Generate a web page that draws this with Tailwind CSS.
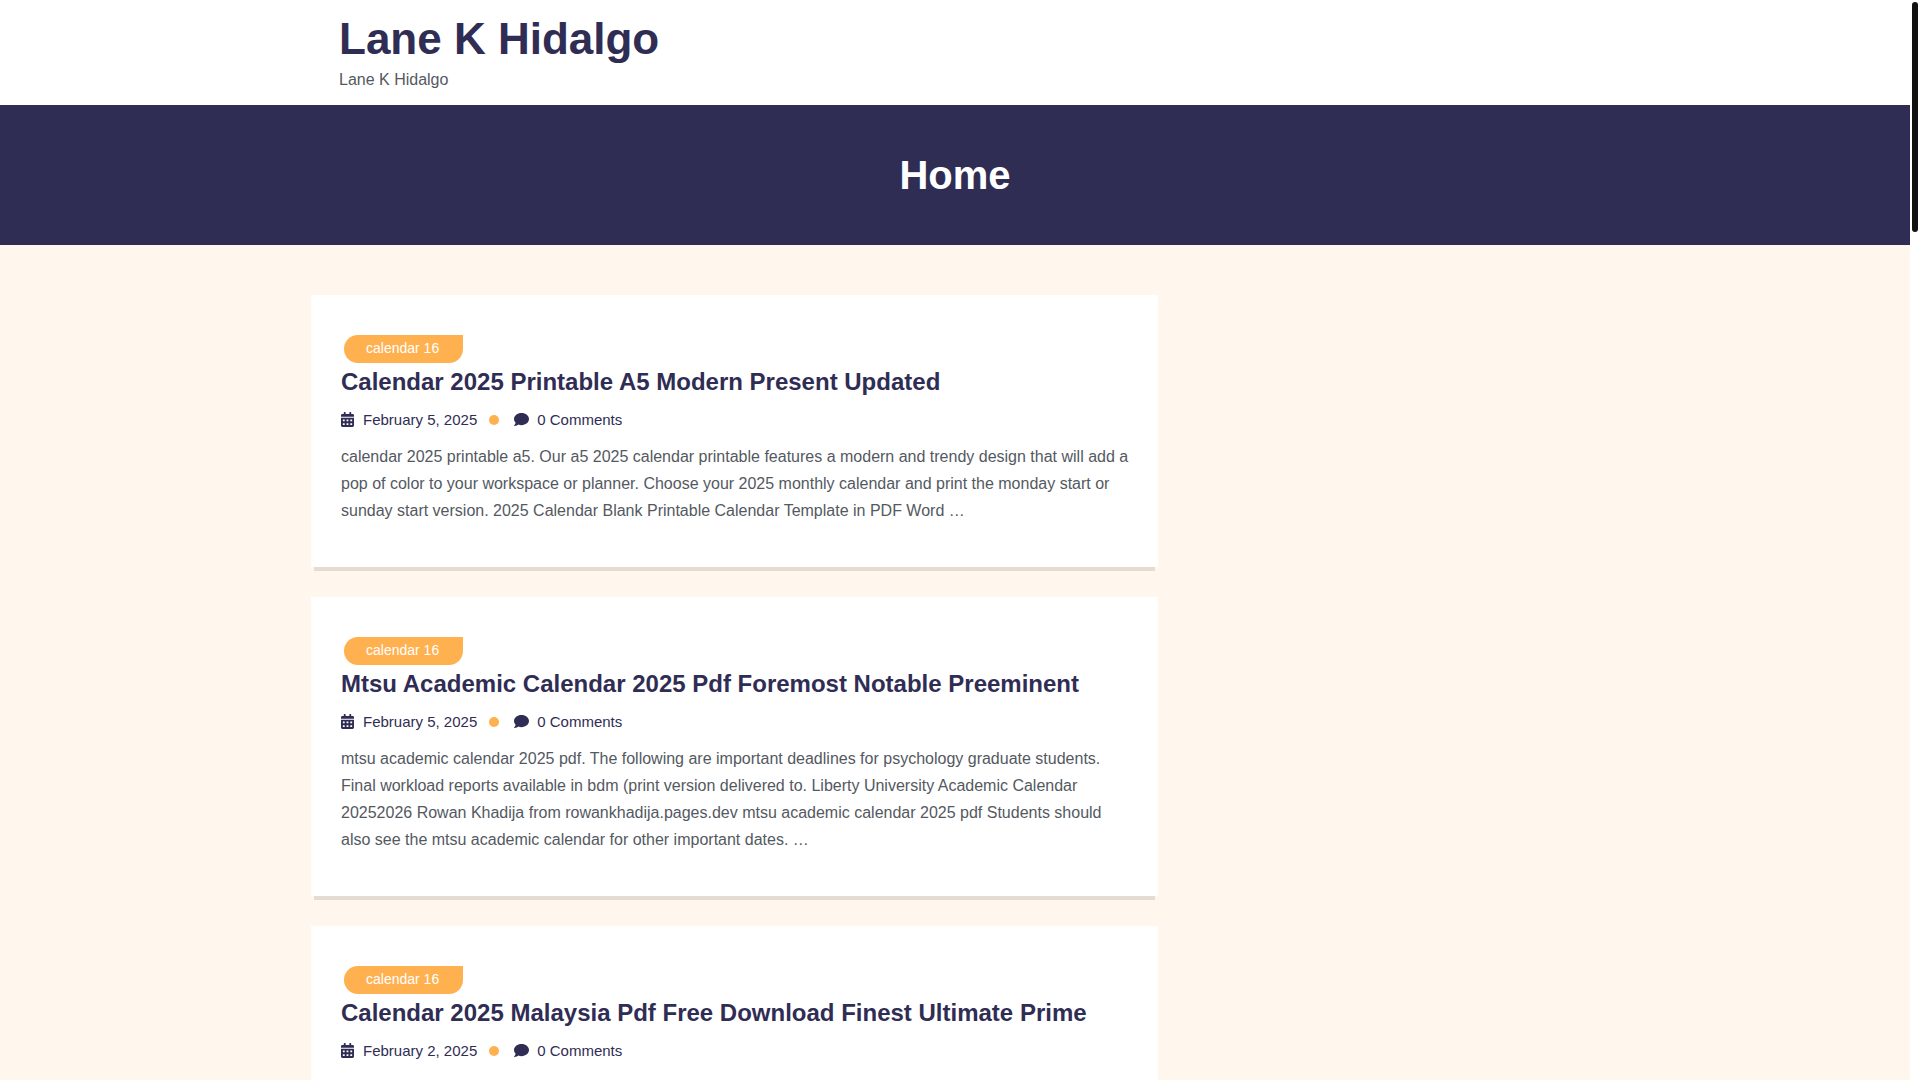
<!DOCTYPE html>
<html lang="en">
<head>
  <meta charset="UTF-8">
  <meta name="viewport" content="width=device-width, initial-scale=1.0">
  <title>Lane K Hidalgo</title>
  <script src="https://cdn.jsdelivr.net/npm/@tailwindcss/browser@4"></script>
</head>
<body class="relative h-screen overflow-hidden bg-white pr-[10px] font-[Arial,'Liberation_Sans',sans-serif] text-base text-[#54595f]">

  <!-- icons shared by the post meta rows -->
  <svg class="hidden" xmlns="http://www.w3.org/2000/svg">
    <symbol id="icon-calendar" viewBox="0 0 448 512">
      <path d="M0 464c0 26.500 21.500 48 48 48h352c26.500 0 48-21.500 48-48V192H0v272zm320-196c0-6.600 5.400-12 12-12h40c6.600 0 12 5.400 12 12v40c0 6.600-5.400 12-12 12h-40c-6.600 0-12-5.400-12-12v-40zm0 128c0-6.600 5.400-12 12-12h40c6.600 0 12 5.400 12 12v40c0 6.600-5.400 12-12 12h-40c-6.600 0-12-5.400-12-12v-40zM192 268c0-6.600 5.400-12 12-12h40c6.600 0 12 5.400 12 12v40c0 6.600-5.400 12-12 12h-40c-6.600 0-12-5.400-12-12v-40zm0 128c0-6.600 5.400-12 12-12h40c6.600 0 12 5.400 12 12v40c0 6.600-5.400 12-12 12h-40c-6.600 0-12-5.400-12-12v-40zM64 268c0-6.600 5.400-12 12-12h40c6.600 0 12 5.400 12 12v40c0 6.600-5.400 12-12 12H76c-6.600 0-12-5.400-12-12v-40zm0 128c0-6.600 5.400-12 12-12h40c6.600 0 12 5.400 12 12v40c0 6.600-5.400 12-12 12H76c-6.600 0-12-5.400-12-12v-40zM400 64h-48V16c0-8.800-7.200-16-16-16h-32c-8.800 0-16 7.200-16 16v48H160V16c0-8.800-7.200-16-16-16h-32c-8.800 0-16 7.200-16 16v48H48C21.500 64 0 85.500 0 112v48h448v-48c0-26.500-21.500-48-48-48z"/>
    </symbol>
    <symbol id="icon-comment" viewBox="0 0 512 512">
      <path d="M256 32C114.600 32 0 125.100 0 240c0 49.600 21.400 95 57 130.700C44.500 421.100 2.700 466 2.200 466.500c-2.200 2.300-2.800 5.700-1.500 8.700S4.800 480 8 480c66.300 0 116-31.800 140.600-51.400 32.700 12.300 69 19.400 107.400 19.400 141.400 0 256-93.100 256-208S397.400 32 256 32z"/>
    </symbol>
  </svg>

  <header class="mx-auto max-w-[1288px] px-7 pt-[10px] pb-[13px]">
    <a href="#" class="block text-[44px] leading-[58px] font-bold text-[#302d55]">Lane K Hidalgo</a>
    <p class="leading-6">Lane K Hidalgo</p>
  </header>

  <section class="bg-[#302d55] py-[45px] text-center">
    <h1 class="text-[40px] leading-[50px] font-bold text-white">Home</h1>
  </section>

  <main class="min-h-screen bg-[#fff6ed] pt-[50px]">
    <div class="mx-auto grid max-w-[1288px] grid-cols-[847px_1fr] max-xl:grid-cols-1">
      <div class="flex flex-col gap-[30px]">

        <article class="bg-white pt-10 pr-7 pb-[43px] pl-[30px] shadow-[0_7px_0_-3px_#e5dbd1]">
          <a href="#" class="ml-[3px] inline-block rounded-2xl rounded-tr-none bg-[#ffb04f] pr-6 pb-[2px] pl-[22px] align-top text-sm leading-[26px] text-white">calendar 16</a>
          <h2 class="text-2xl leading-[38px] font-bold text-[#302d55]"><a href="#">Calendar 2025 Printable A5 Modern Present Updated</a></h2>
          <div class="mb-1 flex h-[38px] items-center text-[15px] text-[#302d55]">
            <svg class="mr-[9px] mb-[2px] h-[15px] w-[13px] fill-current"><use href="#icon-calendar"/></svg>
            <a href="#">February 5, 2025</a>
            <span class="mr-[15px] ml-3 size-[10px] rounded-full bg-[#ffb04f]"></span>
            <svg class="mr-2 mb-[2px] size-[15px] fill-current"><use href="#icon-comment"/></svg>
            <a href="#">0 Comments</a>
          </div>
          <p class="leading-[27px]">calendar 2025 printable a5. Our a5 2025 calendar printable features a modern and trendy design that will add a pop of color to your workspace or planner. Choose your 2025 monthly calendar and print the monday start or sunday start version. 2025 Calendar Blank Printable Calendar Template in PDF Word …</p>
        </article>

        <article class="bg-white pt-10 pr-7 pb-[43px] pl-[30px] shadow-[0_7px_0_-3px_#e5dbd1]">
          <a href="#" class="ml-[3px] inline-block rounded-2xl rounded-tr-none bg-[#ffb04f] pr-6 pb-[2px] pl-[22px] align-top text-sm leading-[26px] text-white">calendar 16</a>
          <h2 class="text-2xl leading-[38px] font-bold text-[#302d55]"><a href="#">Mtsu Academic Calendar 2025 Pdf Foremost Notable Preeminent</a></h2>
          <div class="mb-1 flex h-[38px] items-center text-[15px] text-[#302d55]">
            <svg class="mr-[9px] mb-[2px] h-[15px] w-[13px] fill-current"><use href="#icon-calendar"/></svg>
            <a href="#">February 5, 2025</a>
            <span class="mr-[15px] ml-3 size-[10px] rounded-full bg-[#ffb04f]"></span>
            <svg class="mr-2 mb-[2px] size-[15px] fill-current"><use href="#icon-comment"/></svg>
            <a href="#">0 Comments</a>
          </div>
          <p class="leading-[27px]">mtsu academic calendar 2025 pdf. The following are important deadlines for psychology graduate students. Final workload reports available in bdm (print version delivered to. Liberty University Academic Calendar 20252026 Rowan Khadija from rowankhadija.pages.dev mtsu academic calendar 2025 pdf Students should also see the mtsu academic calendar for other important dates. …</p>
        </article>

        <article class="bg-white pt-10 pr-7 pb-[43px] pl-[30px] shadow-[0_7px_0_-3px_#e5dbd1]">
          <a href="#" class="ml-[3px] inline-block rounded-2xl rounded-tr-none bg-[#ffb04f] pr-6 pb-[2px] pl-[22px] align-top text-sm leading-[26px] text-white">calendar 16</a>
          <h2 class="text-2xl leading-[38px] font-bold text-[#302d55]"><a href="#">Calendar 2025 Malaysia Pdf Free Download Finest Ultimate Prime</a></h2>
          <div class="mb-1 flex h-[38px] items-center text-[15px] text-[#302d55]">
            <svg class="mr-[9px] mb-[2px] h-[15px] w-[13px] fill-current"><use href="#icon-calendar"/></svg>
            <a href="#">February 2, 2025</a>
            <span class="mr-[15px] ml-3 size-[10px] rounded-full bg-[#ffb04f]"></span>
            <svg class="mr-2 mb-[2px] size-[15px] fill-current"><use href="#icon-comment"/></svg>
            <a href="#">0 Comments</a>
          </div>
        </article>

      </div>
    </div>
  </main>

  <!-- scroll indicator -->
  <div class="absolute top-[2px] right-[2px] h-[230px] w-[6px] rounded-full bg-[#111]"></div>
</body>
</html>
